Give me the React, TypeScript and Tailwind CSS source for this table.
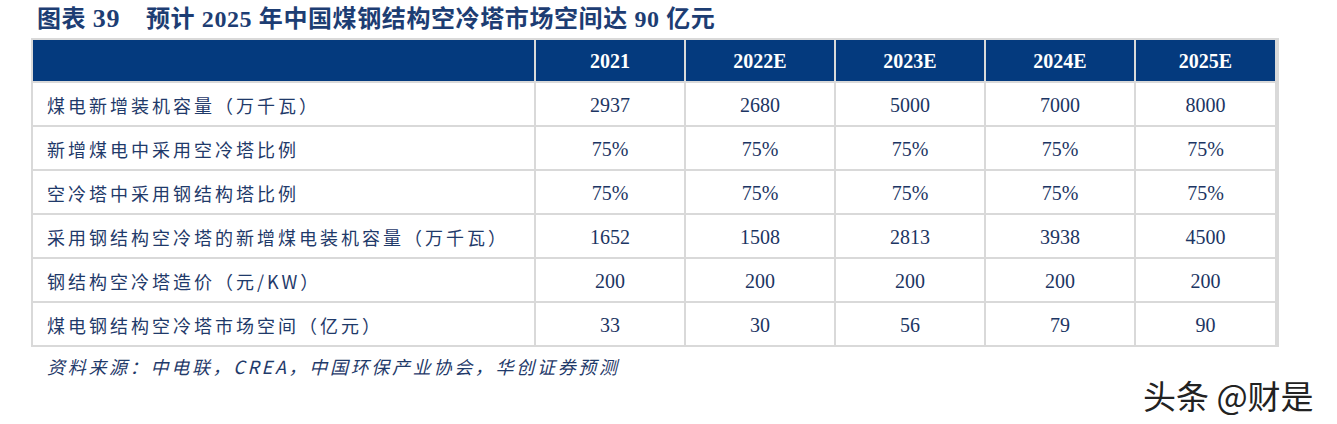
import React from "react"

const serif = "font-['Liberation_Serif','Noto_Sans_CJK_SC',serif]"
const cjk = "font-['Noto_Sans_CJK_SC',sans-serif]"

const years = ["2021", "2022E", "2023E", "2024E", "2025E"]

const rows: { label: string; values: string[] }[] = [
  { label: "煤电新增装机容量（万千瓦）", values: ["2937", "2680", "5000", "7000", "8000"] },
  { label: "新增煤电中采用空冷塔比例", values: ["75%", "75%", "75%", "75%", "75%"] },
  { label: "空冷塔中采用钢结构塔比例", values: ["75%", "75%", "75%", "75%", "75%"] },
  { label: "采用钢结构空冷塔的新增煤电装机容量（万千瓦）", values: ["1652", "1508", "2813", "3938", "4500"] },
  { label: "钢结构空冷塔造价（元/KW）", values: ["200", "200", "200", "200", "200"] },
  { label: "煤电钢结构空冷塔市场空间（亿元）", values: ["33", "30", "56", "79", "90"] },
]

export default function App() {
  return (
    <div className="w-[1337px] h-[424px] bg-white relative overflow-hidden">
      <div className={`pl-[37px] pt-[4px] h-[38px] text-[24px] font-bold text-[#1d3d73] leading-[30px] tracking-[0.6px] ${serif}`}>
        图表 <span className="text-[26px]">39</span>
        <span className="inline-block w-[26px]" />
        预计 2025 年中国煤钢结构空冷塔市场空间达 90 亿元
      </div>
      <div className="ml-[31px] w-[1248px] bg-[#d9d9d9] p-[2px] grid grid-cols-[501px_148px_148px_148px_148px_139px] gap-[2px]">
        <div className="bg-[#043a7e] h-[41px]" />
        {years.map((y) => (
          <div
            key={y}
            className={`bg-[#043a7e] h-[41px] flex items-center justify-center text-white font-bold text-[20px] ${serif}`}
          >
            {y}
          </div>
        ))}
        {rows.map((r) => (
          <React.Fragment key={r.label}>
            <div className={`bg-white h-[42px] flex items-center pl-[14px] pt-[2px] text-[18px] tracking-[3px] text-[#1f3a6a] ${cjk}`}>
              {r.label}
            </div>
            {r.values.map((v, i) => (
              <div
                key={i}
                className={`bg-white h-[42px] flex items-center justify-center pt-[2px] text-[20px] text-[#1c3563] ${serif}`}
              >
                {v}
              </div>
            ))}
          </React.Fragment>
        ))}
      </div>
      <div className={`pl-[47px] pt-[6px] text-[18px] italic text-[#1f3a6a] tracking-[2.7px] ${cjk}`}>
        资料来源：中电联，CREA，中国环保产业协会，华创证券预测
      </div>
      <div
        className={`absolute left-[1143px] top-[371px] text-[33px] text-[#222] ${cjk} [text-shadow:1px_1px_0_#fff,-1px_-1px_0_#fff]`}
      >
        头条 @财是
      </div>
    </div>
  )
}
